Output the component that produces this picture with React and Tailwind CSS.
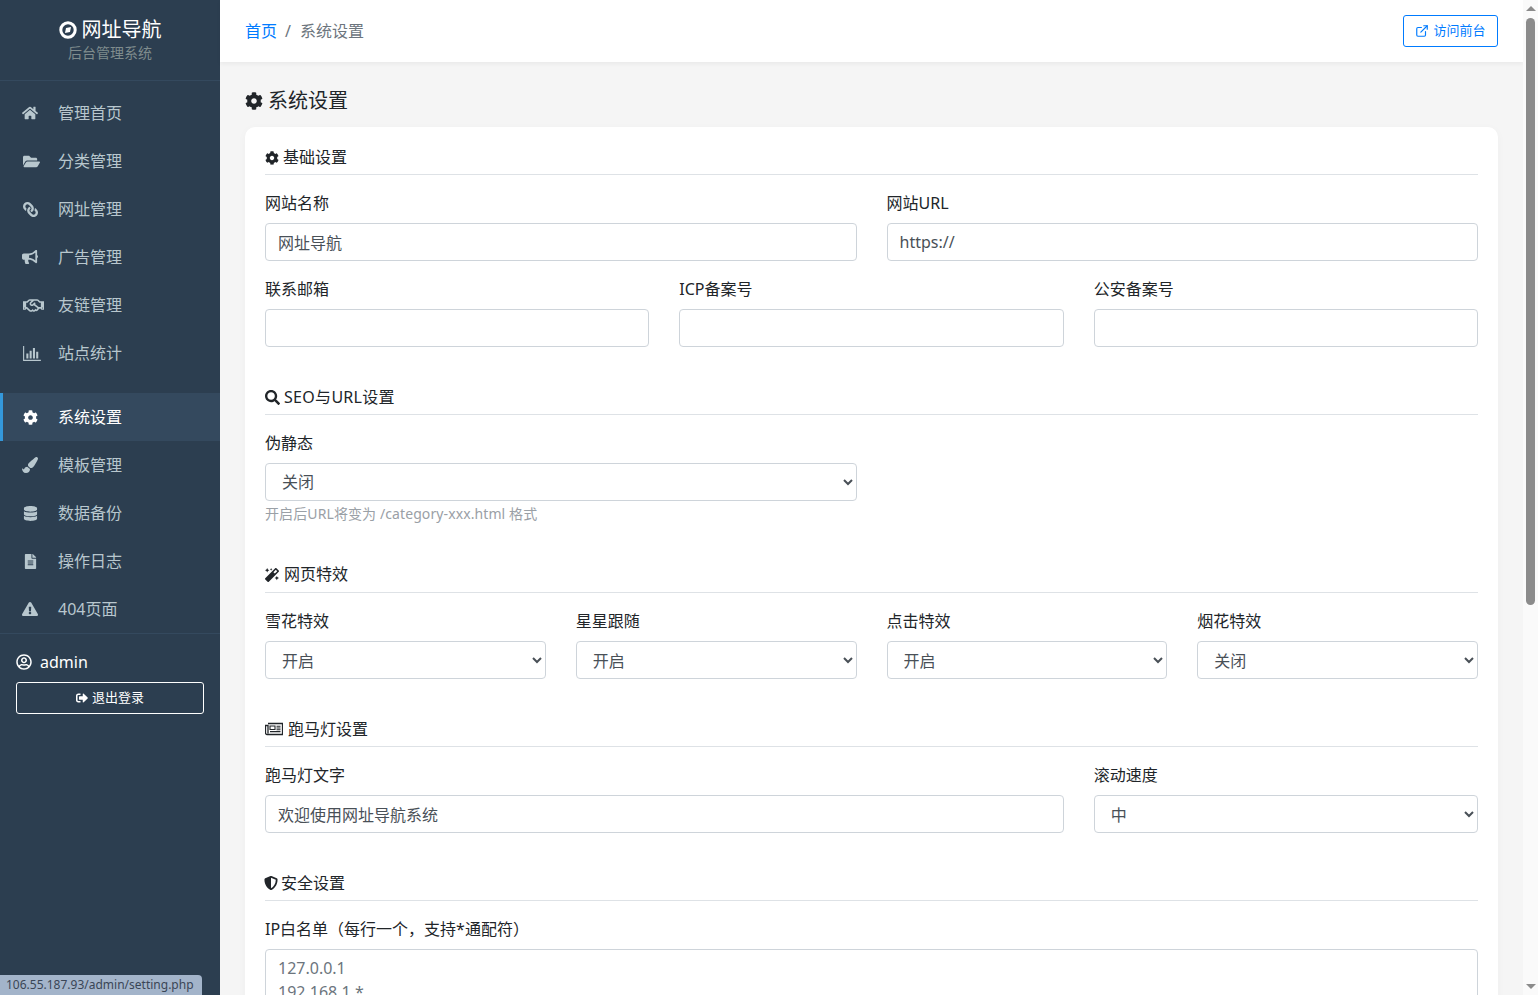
import {
  FaBullhorn,
  FaCog,
  FaDatabase,
  FaExclamationTriangle,
  FaFileAlt,
  FaFolderOpen,
  FaHome,
  FaLink,
  FaMagic,
  FaPaintBrush,
  FaRegHandshake,
  FaRegUserCircle,
  FaSearch,
  FaShieldAlt,
  FaSignOutAlt,
} from 'react-icons/fa';
import { ExternalLink } from 'lucide-react';

const fieldCls =
  'block w-full h-[38px] rounded-[4px] border border-[#ced4da] bg-white px-3 text-base text-[#495057] outline-none';

function BarsIcon({ className }) {
  return (
    <svg viewBox="0 0 20 16" className={className} fill="currentColor">
      <path d="M1 0h1.2v14.6H20V16H1z" />
      <path d="M4.5 8h2.2v5.4H4.5zM8 5h2.2v8.4H8zM11.5 2h2.2v11.4h-2.2zM15 6h2.2v7.4H15z" />
    </svg>
  );
}

function CompassIcon({ className }) {
  return (
    <svg viewBox="0 0 18 18" className={className}>
      <circle cx="9" cy="9" r="7.2" fill="none" stroke="currentColor" strokeWidth="3" />
      <path d="M12 6l-1 5-5 1 1-5z" fill="currentColor" />
    </svg>
  );
}

function NewsIcon({ className }) {
  return (
    <svg viewBox="0 0 18 14" className={className} fill="none" stroke="currentColor">
      <path d="M3 1.500h14.500v11H2a1.500 1.500 0 0 1-1.500-1.500V3.500H3v8" strokeWidth="1.300" />
      <path d="M5 4h5v3.500H5zM11.500 4.200h4M11.500 6h4M11.500 7.800h4M5 9.600h10.500" strokeWidth="1.100" />
    </svg>
  );
}

function NavItem({ icon: Icon, label, active, iconClass = 'text-[16px]' }) {
  return (
    <a
      href="#"
      className={`flex h-12 items-center border-l-[3px] pl-[17px] text-base ${
        active
          ? 'border-[#3498db] bg-[#34495e] text-white'
          : 'border-transparent text-[#b8c7ce]'
      }`}
    >
      <span className="mr-[18px] flex w-5 justify-center">
        <Icon className={iconClass} />
      </span>
      {label}
    </a>
  );
}

function Sidebar() {
  return (
    <aside className="h-full w-[220px] shrink-0 bg-[#2c3e50]">
      <div className="flex h-[81px] flex-col items-center border-b border-[#34495e] pt-[18px]">
        <div className="flex items-center gap-[5px] text-[20px] leading-6 text-white">
          <CompassIcon className="h-[18px] w-[18px]" />
          网址导航
        </div>
        <div className="text-[14px] leading-[21px] text-[#7f8c8d]">后台管理系统</div>
      </div>

      <nav className="pt-2">
        <NavItem icon={FaHome} label="管理首页" />
        <NavItem icon={FaFolderOpen} label="分类管理" iconClass="text-[17px] translate-x-px" />
        <NavItem icon={FaLink} label="网址管理" iconClass="text-[15px] -scale-x-100" />
        <NavItem icon={FaBullhorn} label="广告管理" />
        <NavItem icon={FaRegHandshake} label="友链管理" iconClass="text-[21px] translate-x-[3px] shrink-0" />
        <NavItem icon={BarsIcon} label="站点统计" iconClass="w-[19px] h-[15px] translate-x-px" />
        <div className="h-4" />
        <NavItem icon={FaCog} label="系统设置" active iconClass="text-[15px]" />
        <NavItem icon={FaPaintBrush} label="模板管理" />
        <NavItem icon={FaDatabase} label="数据备份" iconClass="text-[15px]" />
        <NavItem icon={FaFileAlt} label="操作日志" iconClass="text-[15px]" />
        <NavItem icon={FaExclamationTriangle} label="404页面" />
      </nav>

      <div className="border-t border-[#34495e] px-4 pt-4">
        <div className="flex h-6 items-center gap-2 text-base text-white">
          <FaRegUserCircle className="text-[16px]" />
          admin
        </div>
        <button className="mt-2 flex h-8 w-full items-center justify-center gap-1 rounded-[3px] border border-white text-[13px] text-white">
          <FaSignOutAlt className="text-[12px]" />
          退出登录
        </button>
      </div>
    </aside>
  );
}

function SectionTitle({ icon: Icon, children, first, gap = 'gap-[4px]', iconClass = 'text-[14px]' }) {
  return (
    <h6
      className={`mb-4 flex items-center ${gap} border-b border-[#dee2e6] pb-[7px] text-base leading-[19.2px] text-[#212529] ${
        first ? 'pt-px' : 'mt-[25px]'
      }`}
    >
      <Icon className={iconClass} />
      {children}
    </h6>
  );
}

function Field({ label, children, className = '' }) {
  return (
    <div className={`mb-4 ${className}`}>
      <label className="mb-2 block text-base leading-6 text-[#212529]">{label}</label>
      {children}
    </div>
  );
}

function Input({ value = '' }) {
  return <input className={fieldCls} defaultValue={value} />;
}

function Select({ value, options = ['开启', '关闭'], className = '' }) {
  return (
    <select className={`${fieldCls} ${className}`} defaultValue={value}>
      {options.map((o) => (
        <option key={o}>{o}</option>
      ))}
    </select>
  );
}

function Scrollbar() {
  return (
    <div className="flex h-full w-[15px] shrink-0 flex-col items-center bg-[#fafafa]">
      <div className="mt-[6px] h-0 w-0 border-x-[5px] border-b-[5px] border-x-transparent border-b-[#8b8b8b]" />
      <div className="mt-[7px] h-[587px] w-[9px] rounded-full bg-[#8b8b8b]" />
      <div className="mt-auto mb-[6px] h-0 w-0 border-x-[5px] border-t-[5px] border-x-transparent border-t-[#8b8b8b]" />
    </div>
  );
}

export default function App() {
  return (
    <div
      className="relative flex h-[995px] overflow-hidden bg-[#f5f5f5]"
      style={{ fontFamily: '"Noto Sans", "Noto Sans CJK SC", sans-serif' }}
    >
      <Sidebar />

      <main className="min-w-0 flex-1">
        {/* top bar */}
        <header className="flex h-[62px] items-center justify-between bg-white px-[25px] shadow-[0_2px_4px_rgba(0,0,0,0.05)]">
          <div className="flex items-center text-base">
            <a href="#" className="text-[#007bff]">首页</a>
            <span className="pl-2 pr-[9px] text-[#6c757d]">/</span>
            <span className="text-[#6c757d]">系统设置</span>
          </div>
          <a
            href="#"
            className="flex h-8 w-[95px] items-center justify-center gap-1 rounded-[3px] border border-[#007bff] pb-px text-[13px] text-[#007bff]"
          >
            <ExternalLink className="h-[14px] w-[14px]" />
            访问前台
          </a>
        </header>

        <div className="px-[25px] pt-[25px]">
          <h4 className="mb-[13px] flex h-[27px] items-center gap-[5px] text-[20px] text-[#212529]">
            <FaCog className="text-[18px]" />
            系统设置
          </h4>

          <div className="rounded-[10px] bg-white p-5 shadow-[0_2px_10px_rgba(0,0,0,0.03)]">
            <SectionTitle icon={FaCog} first>基础设置</SectionTitle>
            <div className="grid grid-cols-2 gap-x-[30px]">
              <Field label="网站名称"><Input value="网址导航" /></Field>
              <Field label="网站URL"><Input value="https://" /></Field>
            </div>
            <div className="grid grid-cols-3 gap-x-[30px]">
              <Field label="联系邮箱"><Input /></Field>
              <Field label="ICP备案号"><Input /></Field>
              <Field label="公安备案号"><Input /></Field>
            </div>

            <SectionTitle icon={FaSearch} iconClass="text-[15px]">
              <span className="tracking-[0.3px]">SEO与URL设置</span>
            </SectionTitle>
            <div className="grid grid-cols-2 gap-x-[30px]">
              <Field label="伪静态">
                <Select value="关闭" />
                <small className="mt-[2px] block text-[14px] leading-[21px] tracking-[0.1px] text-[#9aa0a6]">
                  开启后URL将变为 /category-xxx.html 格式
                </small>
              </Field>
            </div>

            <SectionTitle icon={FaMagic} gap="gap-[5px]">网页特效</SectionTitle>
            <div className="grid grid-cols-4 gap-x-[30px]">
              <Field label="雪花特效"><Select value="开启" className="pt-[2px]" /></Field>
              <Field label="星星跟随"><Select value="开启" className="pt-[2px]" /></Field>
              <Field label="点击特效"><Select value="开启" className="pt-[2px]" /></Field>
              <Field label="烟花特效"><Select value="关闭" className="pt-[2px]" /></Field>
            </div>

            <SectionTitle icon={NewsIcon} gap="gap-[5px]" iconClass="w-[18px] h-[14px]">跑马灯设置</SectionTitle>
            <div className="grid grid-cols-3 gap-x-[30px]">
              <Field label="跑马灯文字" className="col-span-2"><Input value="欢迎使用网址导航系统" /></Field>
              <Field label="滚动速度"><Select value="中" options={['慢', '中', '快']} className="pt-[2px]" /></Field>
            </div>

            <SectionTitle icon={FaShieldAlt} gap="gap-[3px]" iconClass="text-[14px] -ml-px">安全设置</SectionTitle>
            <Field label="IP白名单（每行一个，支持*通配符）">
              <textarea
                rows={5}
                className="block w-full rounded-[4px] border border-[#ced4da] bg-white px-3 py-[6px] text-base leading-6 text-[#6c757d] outline-none"
                defaultValue={'127.0.0.1\n192.168.1.*'}
              />
            </Field>
          </div>
        </div>
      </main>

      <Scrollbar />

      {/* browser link preview, lies over the sidebar */}
      <div className="absolute bottom-0 left-0 flex h-5 w-[202px] items-center rounded-tr-[4px] bg-[#a3b4ca] pl-[6px] text-[12px] text-[#3a4656]">
        106.55.187.93/admin/setting.php
      </div>
    </div>
  );
}
